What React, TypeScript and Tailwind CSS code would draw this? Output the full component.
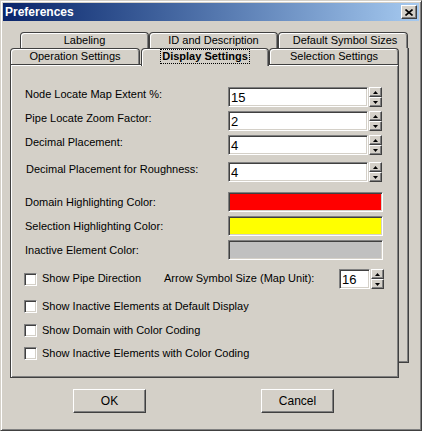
import React from "react";

const sunken =
  "border border-t-[#808080] border-l-[#808080] border-r-white border-b-white shadow-[inset_1px_1px_0_#404040,inset_-1px_-1px_0_#d4d0c8]";
const raised =
  "border border-t-white border-l-white border-r-[#404040] border-b-[#404040] shadow-[inset_-1px_-1px_0_#808080]";

function Arrow({ up }: { up: boolean }) {
  return (
    <svg width="5" height="3" viewBox="0 0 5 3">
      {up ? <polygon points="2.5,0 5,3 0,3" fill="#000" /> : <polygon points="0,0 5,0 2.5,3" fill="#000" />}
    </svg>
  );
}

function Spinner() {
  return (
    <div className="flex flex-col w-[13px] h-[20px] ml-[1px] shrink-0">
      <div className={`h-[10px] bg-[#d4d0c8] flex items-center justify-center ${raised}`}>
        <Arrow up={true} />
      </div>
      <div className={`h-[10px] bg-[#d4d0c8] flex items-center justify-center ${raised}`}>
        <Arrow up={false} />
      </div>
    </div>
  );
}

function NumRow({ label, value, extraPad }: { label: string; value: string; extraPad?: boolean }) {
  return (
    <div className="flex items-center h-[20px]">
      <div className={`w-[203px] pb-[6px] ${extraPad ? "pl-[1px]" : ""}`}>{label}</div>
      <div className={`w-[140px] h-[20px] bg-white flex items-center pl-[2px] text-[13px] ${sunken}`}>{value}</div>
      <Spinner />
    </div>
  );
}

function ColorRow({ label, color }: { label: string; color: string }) {
  return (
    <div className="flex items-center h-[20px]">
      <div className="w-[203px]">{label}</div>
      <div className={`w-[155px] h-[20px] ${color} ${sunken}`} />
    </div>
  );
}

function Check() {
  return <span className={`block w-[13px] h-[13px] bg-white shrink-0 ${sunken}`} />;
}

function CheckRow({ label }: { label: string }) {
  return (
    <div className="flex items-center h-[13px] ml-[-1px]">
      <Check />
      <span className="ml-[5px] pb-[1px]">{label}</span>
    </div>
  );
}

const tabBase =
  "h-[16px] bg-[#d4d0c8] border border-b-0 border-[#404040] rounded-t-[4px] shadow-[inset_1px_1px_0_#ffffff,inset_-1px_0_0_#808080] flex items-center justify-center text-[11px] shrink-0";

export default function App() {
  return (
    <div
      className="w-[422px] h-[431px] bg-[#d4d0c8] border border-t-[#d4d0c8] border-l-[#d4d0c8] border-r-[#404040] border-b-[#404040] shadow-[inset_1px_1px_0_#ffffff,inset_-1px_-1px_0_#808080] p-[2px] text-black text-[11px] leading-none"
      style={{ fontFamily: '"Liberation Sans", Arial, sans-serif' }}
    >
      {/* Title bar */}
      <div className="h-[18px] w-[416px] bg-gradient-to-r from-[#0a246a] to-[#a6caf0] flex items-center justify-between pl-[2px] pr-[2px]">
        <span className="text-white font-bold text-[12px]">Preferences</span>
        <div className={`w-[16px] h-[14px] bg-[#d4d0c8] flex items-center justify-center ${raised}`}>
          <svg width="8" height="7" viewBox="0 0 8 7">
            <path d="M0.5 0.5 L7.5 6.5 M7.5 0.5 L0.5 6.5" stroke="#000" strokeWidth="1.6" />
          </svg>
        </div>
      </div>

      {/* Tabs area */}
      <div className="ml-[7px] mt-[11px]">
        <div className="flex ml-[10px]">
          <div className={`${tabBase} w-[129px]`}>Labeling</div>
          <div className={`${tabBase} w-[129px]`}>ID and Description</div>
          <div className={`${tabBase} w-[130px] pl-[4px]`}>Default Symbol Sizes</div>
        </div>
        <div className="w-[399px] border-r border-b border-[#404040] shadow-[inset_-1px_-1px_0_#808080]">
          <div className="flex h-[16px] items-start">
            <div className={`${tabBase} w-[130px]`}>Operation Settings</div>
            <div
              className={`${tabBase} w-[128px] ml-[1px] h-[18px] relative z-10 items-center pb-[2px]`}
            >
              <span className="font-bold border border-dotted border-black px-[1px] py-[1px]">Display Settings</span>
            </div>
            <div className={`${tabBase} w-[130px]`}>Selection Settings</div>
          </div>
          <div className="w-[389px] h-[314px] mb-[-16px] bg-[#d4d0c8] border border-[#404040] shadow-[inset_1px_1px_0_#ffffff,inset_-1px_-1px_0_#808080] pl-[14px] pt-[22px]">
            <NumRow label="Node Locate Map Extent %:" value="15" />
            <div className="mt-[4px]">
              <NumRow label="Pipe Locate Zoom Factor:" value="2" />
            </div>
            <div className="mt-[4px]">
              <NumRow label="Decimal Placement:" value="4" />
            </div>
            <div className="mt-[7px]">
              <NumRow label="Decimal Placement for Roughness:" value="4" extraPad />
            </div>
            <div className="mt-[10px]">
              <ColorRow label="Domain Highlighting Color:" color="bg-[#ff0000]" />
            </div>
            <div className="mt-[4px]">
              <ColorRow label="Selection Highlighting Color:" color="bg-[#ffff00]" />
            </div>
            <div className="mt-[4px]">
              <ColorRow label="Inactive Element Color:" color="bg-[#c0c0c0]" />
            </div>
            <div className="mt-[9px] flex items-center h-[20px]">
              <div className="w-[139px] flex items-center ml-[-1px]">
                <Check />
                <span className="ml-[5px] pb-[1px]">Show Pipe Direction</span>
              </div>
              <div className="w-[175px] ml-[1px] pb-[1px]">Arrow Symbol Size (Map Unit):</div>
              <div className={`w-[31px] h-[20px] bg-white flex items-center pl-[2px] text-[13px] ${sunken}`}>16</div>
              <Spinner />
            </div>
            <div className="mt-[11px]">
              <CheckRow label="Show Inactive Elements at Default Display" />
            </div>
            <div className="mt-[11px]">
              <CheckRow label="Show Domain with Color Coding" />
            </div>
            <div className="mt-[10px]">
              <CheckRow label="Show Inactive Elements with Color Coding" />
            </div>
          </div>
        </div>
      </div>

      {/* Buttons */}
      <div className="flex mt-[26px] ml-[70px] gap-[115px]">
        <div className={`w-[73px] h-[24px] bg-[#d4d0c8] flex items-center justify-center text-[12px] ${raised}`}>OK</div>
        <div className={`w-[73px] h-[24px] bg-[#d4d0c8] flex items-center justify-center text-[12px] ${raised}`}>Cancel</div>
      </div>
    </div>
  );
}
